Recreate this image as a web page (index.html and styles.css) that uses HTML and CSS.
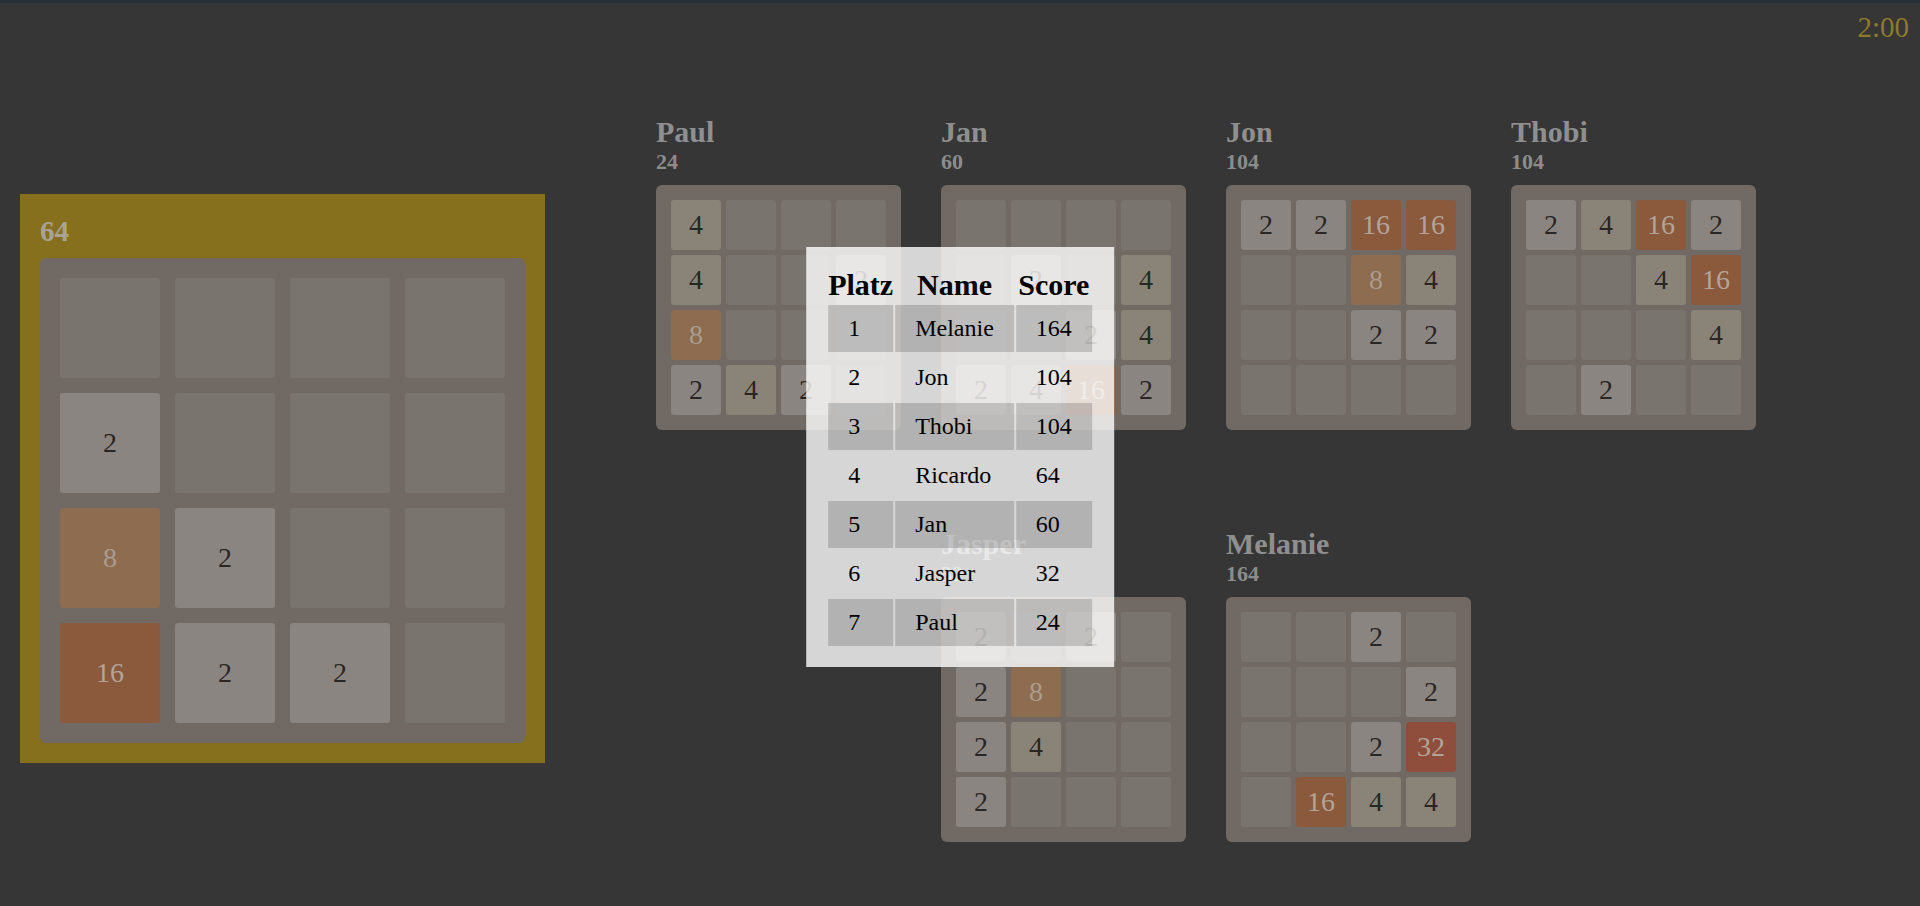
FILE: index.html
```html
<!DOCTYPE html>
<html>
    <head>
        <title>2048 Battle</title>
        <link rel="stylesheet" href="styles.css">
    </head>
<body>
    <div class="topbar">
        <span class="timer">2:00</span>
    </div>

    <div class="game">
        <div class="me">
            <div class="me-score">64</div>
            <div class="board big" data-tiles="0,0,0,0,2,0,0,0,8,2,0,0,16,2,2,0"></div>
        </div>

        <div class="others">
            <div class="player">
                <div class="name">Paul</div>
                <div class="score">24</div>
                <div class="board" data-tiles="4,0,0,0,4,0,0,2,8,0,0,0,2,4,2,0"></div>
            </div>
            <div class="player">
                <div class="name">Jan</div>
                <div class="score">60</div>
                <div class="board" data-tiles="0,0,0,0,0,2,0,4,0,0,2,4,2,4,16,2"></div>
            </div>
            <div class="player">
                <div class="name">Jon</div>
                <div class="score">104</div>
                <div class="board" data-tiles="2,2,16,16,0,0,8,4,0,0,2,2,0,0,0,0"></div>
            </div>
            <div class="player">
                <div class="name">Thobi</div>
                <div class="score">104</div>
                <div class="board" data-tiles="2,4,16,2,0,0,4,16,0,0,0,4,0,2,0,0"></div>
            </div>
            <div class="player second-row">
                <div class="name">Jasper</div>
                <div class="score">32</div>
                <div class="board" data-tiles="2,0,2,0,2,8,0,0,2,4,0,0,2,0,0,0"></div>
            </div>
            <div class="player">
                <div class="name">Melanie</div>
                <div class="score">164</div>
                <div class="board" data-tiles="0,0,2,0,0,0,0,2,0,0,2,32,0,16,4,4"></div>
            </div>
        </div>
    </div>

    <div class="ranking">
        <table>
            <thead>
                <tr><th>Platz</th><th>Name</th><th>Score</th></tr>
            </thead>
            <tbody>
                <tr><td>1</td><td>Melanie</td><td>164</td></tr>
                <tr><td>2</td><td>Jon</td><td>104</td></tr>
                <tr><td>3</td><td>Thobi</td><td>104</td></tr>
                <tr><td>4</td><td>Ricardo</td><td>64</td></tr>
                <tr><td>5</td><td>Jan</td><td>60</td></tr>
                <tr><td>6</td><td>Jasper</td><td>32</td></tr>
                <tr><td>7</td><td>Paul</td><td>24</td></tr>
            </tbody>
        </table>
    </div>

    <script>
        // fill every board with its tiles, 0 = empty field
        document.querySelectorAll('.board').forEach(function(board) {
            board.dataset.tiles.split(',').forEach(function(value) {
                const tile = document.createElement('div');
                tile.className = 'tile';
                if (value !== '0') {
                    tile.className += ' t' + value;
                    tile.textContent = value;
                }
                board.appendChild(tile);
            });
        });
    </script>
</body>
</html>
```

FILE: styles.css
```css
    * {
        box-sizing: border-box;
    }

    body {
        font-family: "Liberation Serif", "Times New Roman", serif;
        background-color: #363636;
        border-top: 3px solid #2b3035;
        margin: 0;
        height: 906px;
        overflow: hidden;
    }

    .topbar {
        height: 47px;
        padding: 2px 11px 0 0;
        text-align: right;
    }

    .timer {
        font-size: 29px;
        line-height: 45px;
        color: #8e7a2a;
    }

    .game {
        display: flex;
        align-items: center;
        height: 856px;
        padding-left: 20px;
    }

    .me {
        background-color: #86701e;
        padding: 20px;
    }

    .me-score {
        font-size: 29px;
        font-weight: bold;
        line-height: 34px;
        margin-bottom: 10px;
        color: #a8a298;
    }

    .others {
        margin-left: 111px;
        display: grid;
        grid-template-columns: repeat(4, 245px);
        column-gap: 40px;
        row-gap: 97px;
    }

    .second-row {
        grid-column-start: 2;
    }

    .name {
        font-size: 30px;
        font-weight: bold;
        line-height: 34px;
        color: #8f8f8f;
    }

    .score {
        font-size: 22px;
        font-weight: bold;
        line-height: 26px;
        color: #8c8c8c;
        margin-bottom: 10px;
    }

    .board {
        display: grid;
        grid-template-columns: repeat(4, 50px);
        grid-auto-rows: 50px;
        gap: 5px;
        padding: 15px;
        background-color: #716a64;
        border-radius: 6px;
    }

    .board.big {
        grid-template-columns: repeat(4, 100px);
        grid-auto-rows: 100px;
        gap: 15px;
        padding: 20px;
    }

    .tile {
        display: flex;
        justify-content: center;
        align-items: center;
        font-size: 28px;
        color: #2a2624;
        background-color: #7a746e;
        border-radius: 3px;
    }

    .t2 {
        background-color: #8a8581;
    }

    .t4 {
        background-color: #8a8478;
    }

    .t8 {
        background-color: #8d6c50;
        color: #aa9c8e;
    }

    .t16 {
        background-color: #8b5a3d;
        color: #b2a498;
    }

    .t32 {
        background-color: #8f4e3c;
        color: #b2a498;
    }

    .ranking {
        position: absolute;
        top: 247px;
        left: 50%;
        transform: translateX(-50%);
        background-color: rgba(255, 255, 255, 0.8);
        padding: 18px 20px 19px;
    }

    .ranking table {
        border-spacing: 2px;
        font-size: 24px;
    }

    .ranking th {
        font-size: 30px;
        padding: 1px 0;
    }

    .ranking td {
        padding: 9px 20px 10px;
        line-height: 28px;
        text-align: left;
    }

    .ranking tbody tr:nth-child(odd) td {
        background-color: rgba(0, 0, 0, 0.17);
    }
```
